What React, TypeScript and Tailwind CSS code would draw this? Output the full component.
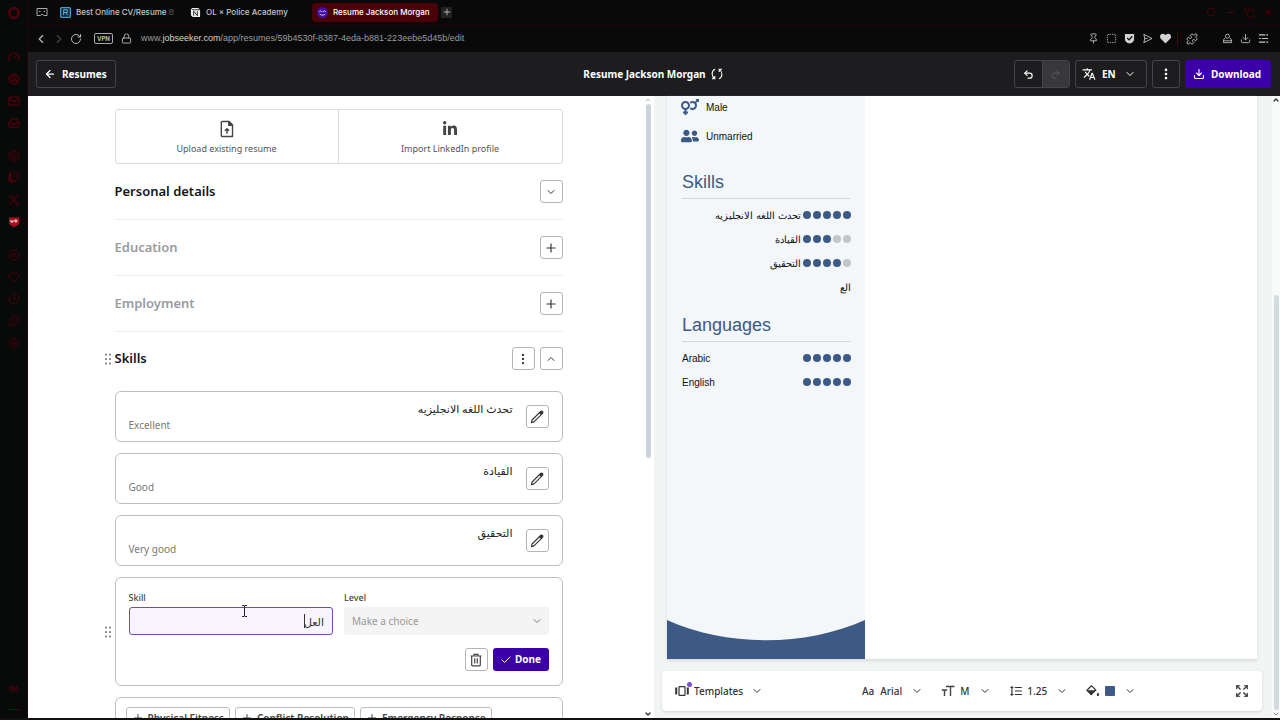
import type { ReactNode } from "react";
import {
  ArrowLeft, Check, ChevronDown, ChevronLeft, ChevronRight, ChevronUp, CirclePlay, CircleUserRound, Clock, Copy,
  Download, EllipsisVertical, Expand, Gauge, Heart, Inbox, Lock, Mail, Minus, Plus, Puzzle, Redo2, RotateCw,
  Search, Settings, SquareDashed, Pin, Undo2, X,
} from "lucide-react";
import { FaHeart, FaLinkedinIn, FaUserFriends, FaVenusMars, FaTwitch } from "react-icons/fa";
import { FaXTwitter } from "react-icons/fa6";
import { MdFormatLineSpacing, MdTranslate } from "react-icons/md";
import { SiOpenai } from "react-icons/si";

const skills = [
  { name: "تحدث اللغه الانجليزيه", level: "Excellent", score: 5 },
  { name: "القيادة", level: "Good", score: 3 },
  { name: "التحقيق", level: "Very good", score: 4 },
];

const languages = [
  { name: "Arabic", score: 5 },
  { name: "English", score: 5 },
];

const suggestions = ["Physical Fitness", "Conflict Resolution", "Emergency Response"];

function PencilIcon() {
  return (
    <svg viewBox="0 0 16 16" className="size-4" fill="none" stroke="#333" strokeWidth="1.1" strokeLinejoin="round">
      <path d="M2.400 13.600 3.100 11 10.600 3.500 12.500 5.400 5 12.900Z" />
      <path d="m10.600 3.500 1.900 1.900 1-1a1.340 1.340 0 0 0-1.900-1.900Z" fill="#333" />
    </svg>
  );
}

function UploadIcon() {
  return (
    <svg viewBox="0 0 16 20" className="h-[18px] w-3.5" fill="none" stroke="#444" strokeWidth="1.6" strokeLinejoin="round">
      <path d="M2.500 1.500h7.800l4 4v13H2.500A1 1 0 0 1 1.500 17.500V2.500a1 1 0 0 1 1-1Z" />
      <path d="M10 1.500v4.300h4.300Z" fill="#444" />
      <path d="M8 15.500v-5.500M5.500 12 8 9.600 10.500 12" />
    </svg>
  );
}

function SyncIcon() {
  return (
    <svg viewBox="0 0 14 14" className="size-3.5" fill="none" stroke="#fff" strokeWidth="1.1">
      <path d="M5 2.200C1.200 4 1.200 9 4.600 11.600M2 11.700h2.800V9M9 11.800C12.800 10 12.800 5 9.400 2.400M12 2.300H9.200V5" />
    </svg>
  );
}

function TrashIcon() {
  return (
    <svg viewBox="0 0 14 14" className="size-3.5" fill="none" stroke="#444" strokeWidth="1.2">
      <path d="M1.500 3h11M5 2.600V1.300h4v1.300M2.700 3v9a.8.8 0 0 0 .8.8h7a.8.8 0 0 0 .8-.8V3M5.700 5.200v5.300M8.300 5.200v5.300" />
    </svg>
  );
}

function TemplatesIcon() {
  return (
    <svg viewBox="0 0 14 12" className="h-3 w-3.5" fill="none" stroke="#333" strokeWidth="1.2">
      <rect x="4" y="1.600" width="6" height="8.800" rx=".6" />
      <path d="M1.200 2.500v7M12.800 2.500v7" strokeWidth="2" />
    </svg>
  );
}

function FontSizeIcon() {
  return (
    <svg viewBox="0 0 14 14" className="size-3.5" fill="none" stroke="#444" strokeWidth="1.4">
      <path d="M5 2.500h8.500M9.500 2.500V12M.8 6h5.400M3.500 6v6" />
    </svg>
  );
}

function FillIcon() {
  return (
    <svg viewBox="0 0 14 14" className="size-3.5" fill="#333">
      <path d="M5.200 1.400 9.800 6 5.200 10.600.9 6.300 5.200 2" fill="none" stroke="#333" strokeWidth="1.2" />
      <path d="M1 6.200h8.600L5.300 11ZM12 8.500c.8 1.100 1.200 1.700 1.200 2.200a1.200 1.200 0 0 1-2.400 0c0-.5.400-1.100 1.200-2.200Z" />
    </svg>
  );
}

function GripIcon() {
  return (
    <svg viewBox="0 0 8 12" className="h-3 w-2 shrink-0" fill="#888">
      {[1.5, 6, 10.5].map((y) => (
        <g key={y}>
          <rect x="1" y={y - 1} width="2" height="2" rx=".5" />
          <rect x="5" y={y - 1} width="2" height="2" rx=".5" />
        </g>
      ))}
    </svg>
  );
}

function SquareButton({ label, children }: { label: string; children: ReactNode }) {
  return (
    <button aria-label={label} className="flex size-[23px] shrink-0 items-center justify-center rounded-[3px] border border-[#b5b5b5] bg-white text-[#333]">
      {children}
    </button>
  );
}

function Section({ title, children, muted }: { title: string; children: ReactNode; muted?: boolean }) {
  return (
    <section className="flex h-14 items-center justify-between border-b border-[#ececec]">
      <h2 className={muted ? "text-[13px] font-semibold text-[#9b9b9b]" : "text-[13px] font-semibold text-[#161616]"}>{title}</h2>
      {children}
    </section>
  );
}

function Dots({ score }: { score: number }) {
  return (
    <span className="flex gap-0.5" role="img" aria-label={`${score} of 5`}>
      {[1, 2, 3, 4, 5].map((n) => (
        <span key={n} className={n <= score ? "size-2 rounded-full bg-[#3c5a85]" : "size-2 rounded-full bg-[#c3c6c9]"} />
      ))}
    </span>
  );
}

function Sidebar() {
  return (
    <nav aria-label="Browser sidebar" className="flex w-7 shrink-0 flex-col items-center border-r border-[#20060b] bg-[#080909] text-[#48030c]">
      <div className="flex h-[46px] shrink-0 pt-1.5">
        <svg viewBox="0 0 14 14" className="size-3.5" fill="none" stroke="currentColor" strokeWidth="3">
          <ellipse cx="7" cy="7" rx="4.500" ry="5" />
        </svg>
      </div>
      <div className="flex flex-col">
        {[Gauge, CircleUserRound, Mail, Inbox].map((Icon, i) => (
          <span key={i} className="flex h-[22px] items-center"><Icon className="size-3" strokeWidth={3} /></span>
        ))}
      </div>
      <div className="mt-[11px] flex flex-col">
        {[SiOpenai, FaTwitch, FaXTwitter].map((Icon, i) => (
          <span key={i} className="flex h-[22px] items-center"><Icon className="size-3" /></span>
        ))}
        <span className="flex h-[22px] items-center">
          <svg viewBox="0 0 12 12" className="size-3">
            <path d="M1 1.500h10v6.500L6 11.500 1 8Z" fill="#a90f1c" />
            <path d="M3 4v2h2V4M7 4v2h1.500L9 5 8.500 4Z" stroke="#eee" fill="none" />
          </svg>
        </span>
      </div>
      <div className="mt-[11px] flex flex-col">
        {[CirclePlay, Heart, Clock, Puzzle, Settings].map((Icon, i) => (
          <span key={i} className="flex h-[22px] items-center"><Icon className="size-3" /></span>
        ))}
      </div>
      <div className="mt-auto flex h-[33px] flex-col items-center">
        <svg viewBox="0 0 12 8" className="h-2 w-3"><path d="M1 4 3 1v6l3-6v6l3-6v6l2-3" stroke="currentColor" fill="none" /></svg>
        <span className="mt-4 h-px w-3 bg-current" />
      </div>
    </nav>
  );
}

function BrowserChrome() {
  return (
    <div className="shrink-0 bg-[#090909]">
      <div className="flex h-[25px] items-center border-b border-[#1d060a] font-[Inter,sans-serif] text-[8px] font-medium text-[#c5c5c5]">
        <svg viewBox="0 0 12 10" className="ml-2 h-2.5 w-3" fill="none" stroke="#aaa">
          <path d="M1 1.500h10v7H7.500L6 7 4.500 8.500H1Z" />
          <path d="M3 4.500h1.500M7.500 4.500H9" />
        </svg>
        <a href="#cv" className="ml-3 flex w-[114px] items-center gap-[5px]">
          <svg viewBox="0 0 12 12" className="size-[11px] shrink-0">
            <rect x=".7" y=".7" width="10.600" height="10.600" rx="1" fill="#0c2c3d" stroke="#4a9dc7" strokeWidth="1.4" />
            <path d="M4 9V3h4v3H4.500M6 6l2.500 3" stroke="#6fc0e4" fill="none" />
          </svg>
          <span className="whitespace-nowrap">Best Online CV/Resume <span className="text-[#4a4a4a]">B</span></span>
        </a>
        <a href="#academy" className="ml-4 flex w-[115px] items-center gap-[5px]">
          <svg viewBox="0 0 12 12" className="size-[11px] shrink-0">
            <path d="M1 1h8l2 2v8H3L1 9Z" fill="#eee" />
            <path d="M4 9.500v-5l4 5v-5M1 1l2 2h8" stroke="#222" fill="none" />
          </svg>
          <span className="whitespace-nowrap">OL × Police Academy</span>
        </a>
        <a href="#resume" className="ml-[7px] flex h-[19px] w-[126px] items-center gap-[5px] rounded-sm bg-[#480208] pl-[5px] text-white">
          <svg viewBox="0 0 12 12" className="size-[11px] shrink-0">
            <circle cx="6" cy="6" r="6" fill="#4210a8" />
            <path d="M2.500 5.500c.5-1.600 2.500-1.600 3 0M6.500 5.500c.5-1.600 2.500-1.600 3 0M3 7.500c1.500 2 4.500 2 6 0" stroke="#d9c8ff" fill="none" />
          </svg>
          <span className="whitespace-nowrap">Resume Jackson Morgan</span>
        </a>
        <button aria-label="New tab" className="ml-[3px] flex size-[11px] items-center justify-center bg-[#222]">
          <Plus className="size-2.5" />
        </button>
        <div className="mr-1.5 ml-auto flex items-center gap-2 text-[#4c030b]">
          <Search className="size-[11px]" />
          <Minus className="size-[11px]" />
          <Copy className="size-[11px]" />
          <X className="size-[11px]" />
        </div>
      </div>
      <div className="flex h-[27px] items-center text-[#b8b8b8]">
        <ChevronLeft className="ml-1.5 size-3.5" />
        <ChevronRight className="ml-1 size-3.5 text-[#444]" />
        <RotateCw className="ml-1 size-3" />
        <span className="ml-3 rounded-[2px] border border-[#aaa] px-0.5 font-[Inter,sans-serif] text-[6px] leading-[9px] font-bold">VPN</span>
        <Lock className="ml-2 size-[11px]" />
        <span className="ml-[9px] font-['Liberation_Sans',Arial,sans-serif] text-[9px] text-[#9c9c9c]">
          www.<span className="text-[#d4d4d4]">jobseeker.com</span>/app/resumes/59b4530f-8387-4eda-b881-223eebe5d45b/edit
        </span>
        <div className="mr-[11px] ml-auto flex items-center">
          <Pin className="size-[11px]" />
          <SquareDashed className="ml-[7px] size-[11px]" />
          <svg viewBox="0 0 12 12" className="ml-[7px] size-[11px]">
            <path d="M1 1h10v6c0 2-2 4-5 4.500C3 11 1 9 1 7Z" fill="#d2d2d2" />
            <path d="m3.500 5.500 2 2 3.500-4" stroke="#111" strokeWidth="1.4" fill="none" />
          </svg>
          <svg viewBox="0 0 12 12" className="ml-[7px] size-[11px]" fill="none" stroke="#c5c5c5" strokeLinejoin="round">
            <path d="M2 1.500 11 6 2 10.500 3 6ZM3 6h3" />
          </svg>
          <FaHeart className="ml-[7px] size-[11px] text-[#d2d2d2]" />
          <span className="ml-1.5 h-3.5 w-px bg-[#4c030b]" />
          <Puzzle className="ml-2 size-3" />
          <svg viewBox="0 0 12 12" className="ml-6 size-[11px]" fill="none" stroke="#b8b8b8">
            <circle cx="6" cy="3.500" r="2.200" />
            <path d="M3.500 5.500C1.500 6.500 1.500 8 1.500 10.500h9c0-2.500 0-4-2-5M1.500 8.500h9" />
          </svg>
          <Download className="ml-[7px] size-[11px]" />
          <svg viewBox="0 0 12 12" className="ml-[7px] size-[11px]" fill="none" stroke="#c5c5c5" strokeWidth="1.2">
            <path d="M1 2h10M1 6h10M1 10h10" />
            <path d="M8.500 1v2M3.500 5v2M8.500 9v2" stroke="#090909" />
          </svg>
        </div>
      </div>
    </div>
  );
}

function AppHeader() {
  return (
    <header className="grid h-11 shrink-0 grid-cols-[1fr_auto_1fr] items-center bg-[#1d1d1f] pr-[9px] pl-2 text-[10px] font-bold text-white">
      <a href="#resumes" className="flex h-7 w-20 items-center gap-1.5 justify-self-start rounded-[3px] border border-[#454547] pl-[7px]">
        <ArrowLeft className="size-3" strokeWidth={2.5} />
        Resumes
      </a>
      <h1 className="flex items-center gap-1">
        Resume Jackson Morgan
        <SyncIcon />
      </h1>
      <div className="flex items-center justify-self-end">
        <div className="flex h-7 w-14 overflow-hidden rounded-[3px] border border-[#454547]">
          <button aria-label="Undo" className="flex flex-1 items-center justify-center border-r border-[#454547]"><Undo2 className="size-[11px]" strokeWidth={2.5} /></button>
          <button aria-label="Redo" disabled className="flex flex-1 items-center justify-center bg-[#38383c] text-[#5c5c60]"><Redo2 className="size-[11px]" /></button>
        </div>
        <button className="ml-[5px] flex h-7 w-[72px] items-center rounded-[3px] border border-[#454547] pl-1.5">
          <MdTranslate className="mr-1.5 size-3.5" />
          EN
          <ChevronDown className="ml-2 size-3" />
        </button>
        <button aria-label="More" className="ml-[5px] flex size-7 items-center justify-center rounded-[3px] border border-[#454547]">
          <EllipsisVertical className="size-3.5" strokeWidth={2.5} />
        </button>
        <button className="ml-[5px] flex h-7 items-center gap-1.5 rounded-[3px] bg-[#3b00a8] pr-2.5 pl-2">
          <Download className="size-3" strokeWidth={2.2} />
          Download
        </button>
      </div>
    </header>
  );
}

function SkillForm() {
  return (
    <div className="-ml-[11px] flex items-center gap-[3px]">
      <GripIcon />
      <form className="h-[109px] min-w-0 flex-1 rounded-md border border-[#bfbfbf] px-[13px] pt-3" onSubmit={(e) => e.preventDefault()}>
        <div className="grid grid-cols-2 gap-[11px]">
          <div>
            <label htmlFor="skill" className="block text-[9px] leading-4 font-medium text-[#444]">Skill</label>
            <div className="relative mt-px">
              <input id="skill" dir="rtl" defaultValue="العل" className="block h-7 w-full rounded-[3px] border border-[#6f4bb5] bg-[#f8f4fd] px-2 text-[11px] text-[#333] outline-none" />
              <span className="absolute top-[7px] right-7 h-3.5 w-px bg-[#333]" />
              <svg viewBox="0 0 7 12" className="absolute -top-0.5 left-28 h-3 w-[7px]" fill="none" stroke="#222">
                <path d="M1 .5h2l.5.5.5-.5h2M3.500 1v10M1 11.500h2l.5-.5.5.5h2" />
              </svg>
            </div>
          </div>
          <div>
            <label htmlFor="level" className="block text-[9px] leading-4 font-medium text-[#444]">Level</label>
            <div className="relative mt-px">
              <select id="level" disabled className="block h-7 w-full appearance-none rounded-[3px] bg-[#f4f4f4] px-2 text-[10px] text-[#999] opacity-100">
                <option>Make a choice</option>
              </select>
              <ChevronDown className="absolute top-2 right-1.5 size-3 text-[#777]" />
            </div>
          </div>
        </div>
        <div className="mt-[13px] flex justify-end gap-[5px]">
          <SquareButton label="Delete skill"><TrashIcon /></SquareButton>
          <button className="flex h-[23px] w-14 items-center justify-center gap-[3px] rounded-[3px] bg-[#3b00a8] text-[10px] font-bold text-white">
            <Check className="size-3" />
            Done
          </button>
        </div>
      </form>
    </div>
  );
}

function Editor() {
  return (
    <main className="min-w-0 flex-1 overflow-hidden bg-white pt-[13px] pl-[5px]">
      <div className="mx-auto w-full max-w-[448px]">
        <div className="grid h-[55px] grid-cols-2 rounded-[3px] border border-[#dcdcdc] text-[9px] text-[#555]">
          <button className="flex flex-col items-center justify-center gap-[3px] border-r border-[#dcdcdc] pt-[3px] leading-4">
            <UploadIcon />
            Upload existing resume
          </button>
          <button className="flex flex-col items-center justify-center gap-[3px] pt-[3px] leading-4">
            <FaLinkedinIn className="h-[18px] w-3.5 text-[#444]" />
            Import LinkedIn profile
          </button>
        </div>
        <Section title="Personal details"><SquareButton label="Expand personal details"><ChevronDown className="size-3" /></SquareButton></Section>
        <Section title="Education" muted><SquareButton label="Add education"><Plus className="size-3.5" /></SquareButton></Section>
        <Section title="Employment" muted><SquareButton label="Add employment"><Plus className="size-3.5" /></SquareButton></Section>
        <section>
          <div className="mb-1.5 -ml-[11px] flex h-[53px] items-center gap-[3px]">
            <GripIcon />
            <h2 className="mr-auto text-[13px] font-semibold text-[#161616]">Skills</h2>
            <div className="flex gap-[5px]">
              <SquareButton label="Skills options"><EllipsisVertical className="size-3.5" /></SquareButton>
              <SquareButton label="Collapse skills"><ChevronUp className="size-3" /></SquareButton>
            </div>
          </div>
          <div className="flex flex-col gap-[11px]">
            {skills.map((skill) => (
              <article key={skill.name} className="flex h-[51px] items-center gap-[13px] rounded-md border border-[#bfbfbf] px-[13px]">
                <div className="flex-1">
                  <p dir="rtl" className="text-[11px] leading-4 font-medium text-[#222]">{skill.name}</p>
                  <p className="text-[10px] leading-4 text-[#777]">{skill.level}</p>
                </div>
                <SquareButton label={`Edit ${skill.level} skill`}><PencilIcon /></SquareButton>
              </article>
            ))}
            <SkillForm />
            <div className="flex items-start gap-[5px] rounded-md border border-[#bfbfbf] px-2.5 py-[9px]">
              {suggestions.map((name) => (
                <button key={name} className="flex h-[22px] items-center gap-1 rounded-[3px] border border-[#bfbfbf] px-[5px] text-[10px] font-semibold whitespace-nowrap text-[#444]">
                  <Plus className="size-3" />
                  {name}
                </button>
              ))}
            </div>
          </div>
        </section>
      </div>
    </main>
  );
}

function ResumePage() {
  return (
    <article className="mr-[15px] ml-[13px] flex min-h-0 flex-1 bg-white font-['Liberation_Sans',Arial,sans-serif] text-[10px] text-[#111] shadow-[0_2px_3px_#d8dadb]">
      <div className="flex w-[198px] shrink-0 flex-col bg-[#f4f7f9]">
        <div className="flex h-[22px] items-center gap-[7px] pl-3.5">
          <FaVenusMars className="size-[18px] text-[#3c5a85]" />
          Male
        </div>
        <div className="mt-[7px] flex h-[22px] items-center gap-[7px] pl-3.5">
          <FaUserFriends className="size-[18px] text-[#3c5a85]" />
          Unmarried
        </div>
        <div className="mr-3.5 ml-[15px]">
          <h2 className="mt-[23px] h-[29px] border-b border-[#d5d9dd] text-[18px] leading-6 text-[#3c5a85]">Skills</h2>
          <ul className="mt-1">
            {skills.map((s) => (
              <li key={s.name} className="flex h-6 items-center justify-end gap-0.5">
                <span dir="rtl" className="whitespace-nowrap">{s.name}</span>
                <Dots score={s.score} />
              </li>
            ))}
            <li className="flex h-6 items-center justify-end">الع</li>
          </ul>
          <h2 className="mt-3.5 h-[29px] border-b border-[#d5d9dd] text-[18px] leading-6 text-[#3c5a85]">Languages</h2>
          <ul className="mt-1">
            {languages.map((l) => (
              <li key={l.name} className="flex h-6 items-center justify-between">
                {l.name}
                <Dots score={l.score} />
              </li>
            ))}
          </ul>
        </div>
        <svg viewBox="0 0 198 40" preserveAspectRatio="none" className="mt-auto h-10 w-full" fill="#3c5a85">
          <path d="M0 1C60 28 138 28 198 1V40H0Z" />
        </svg>
      </div>
    </article>
  );
}

function Toolbar() {
  return (
    <div className="mt-3 mr-2.5 mb-[7px] ml-2 flex h-10 shrink-0 items-center rounded bg-white pr-3 pl-[13px] text-[10px] font-medium text-[#333] shadow-[0_1px_3px_#cfd2d3]">
      <button className="flex items-center gap-[5px]">
        <span className="relative">
          <TemplatesIcon />
          <span className="absolute -top-[3px] -right-[3px] size-[5px] rounded-full bg-[#7a4fd0]" />
        </span>
        Templates
        <ChevronDown className="ml-[3px] size-3" />
      </button>
      <div className="mx-auto flex items-center gap-[18px]">
        <button className="flex items-center gap-1.5">Aa <span>Arial</span><ChevronDown className="ml-[3px] size-3" /></button>
        <button className="flex items-center gap-[5px]"><FontSizeIcon />M<ChevronDown className="ml-[5px] size-3" /></button>
        <button className="flex items-center gap-1"><MdFormatLineSpacing className="size-3.5" />1.25<ChevronDown className="ml-[5px] size-3" /></button>
        <button aria-label="Accent colour" className="flex items-center gap-[5px]">
          <FillIcon />
          <span className="size-2.5 rounded-[1px] bg-[#3c5a85]" />
          <ChevronDown className="ml-1 size-3" />
        </button>
      </div>
      <button aria-label="Full screen" className="mr-px"><Expand className="size-3.5" /></button>
    </div>
  );
}

export default function App() {
  return (
    <div className="flex h-screen overflow-hidden border-b-2 border-[#111] bg-white font-['Noto_Sans','DejaVu_Sans',sans-serif]">
      <Sidebar />
      <div className="flex min-w-0 flex-1 flex-col">
        <BrowserChrome />
        <AppHeader />
        <div className="flex min-h-0 flex-1">
          <Editor />
          <div className="mr-0.5 flex w-2 shrink-0 flex-col items-center justify-between bg-white">
            <ChevronUp className="size-2 shrink-0 text-[#888]" />
            <span className="mb-auto h-[354px] w-[5px] rounded-sm bg-[#cbd4de]" />
            <ChevronDown className="size-2 shrink-0 text-[#333]" strokeWidth={4} />
          </div>
          <aside className="flex w-1/2 shrink-0 bg-[#f3f5f5]">
            <div className="flex min-w-0 flex-1 flex-col">
              <ResumePage />
              <Toolbar />
            </div>
            <div className="flex w-2 shrink-0 flex-col items-center bg-[#f9fbfb]">
              <ChevronUp className="size-2 shrink-0 text-[#333]" strokeWidth={4} />
              <span className="mt-auto h-[415px] w-[5px] rounded-sm bg-[#d2dcdd]" />
              <ChevronDown className="size-2 shrink-0 text-[#888]" strokeWidth={3} />
            </div>
          </aside>
        </div>
      </div>
    </div>
  );
}
